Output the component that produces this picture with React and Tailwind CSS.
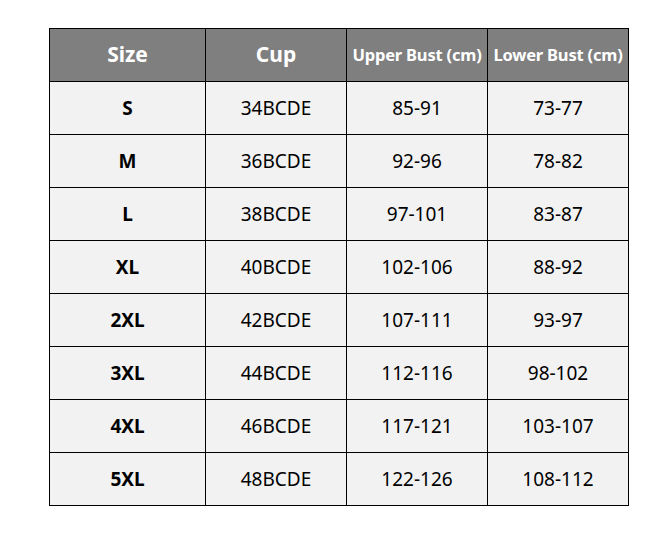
const rows = [
  ["S", "34BCDE", "85-91", "73-77"],
  ["M", "36BCDE", "92-96", "78-82"],
  ["L", "38BCDE", "97-101", "83-87"],
  ["XL", "40BCDE", "102-106", "88-92"],
  ["2XL", "42BCDE", "107-111", "93-97"],
  ["3XL", "44BCDE", "112-116", "98-102"],
  ["4XL", "46BCDE", "117-121", "103-107"],
  ["5XL", "48BCDE", "122-126", "108-112"],
];

const App = () => {
  return (
    <div className="w-[668px] h-[534px] bg-white pt-[28px] pl-[49px] font-['Noto_Sans',sans-serif]">
      <table className="border-collapse text-center table-fixed w-[579px]">
        <thead>
          <tr className="h-[53px] bg-[#7f7f7f] text-white font-bold">
            <th className="w-[156px] border border-black text-[21px]">Size</th>
            <th className="w-[141px] border border-black text-[21px]">Cup</th>
            <th className="w-[141px] border border-black text-[16.5px] tracking-[-0.2px] whitespace-nowrap">Upper Bust (cm)</th>
            <th className="w-[141px] border border-black text-[16.5px] tracking-[-0.2px] whitespace-nowrap">Lower Bust (cm)</th>
          </tr>
        </thead>
        <tbody>
          {rows.map((r) => (
            <tr key={r[0]} className="h-[53px] bg-[#f2f2f2] text-black text-[19px]">
              <td className="border border-black font-bold">{r[0]}</td>
              <td className="border border-black">{r[1]}</td>
              <td className="border border-black">{r[2]}</td>
              <td className="border border-black">{r[3]}</td>
            </tr>
          ))}
        </tbody>
      </table>
    </div>
  );
};

export default App;
